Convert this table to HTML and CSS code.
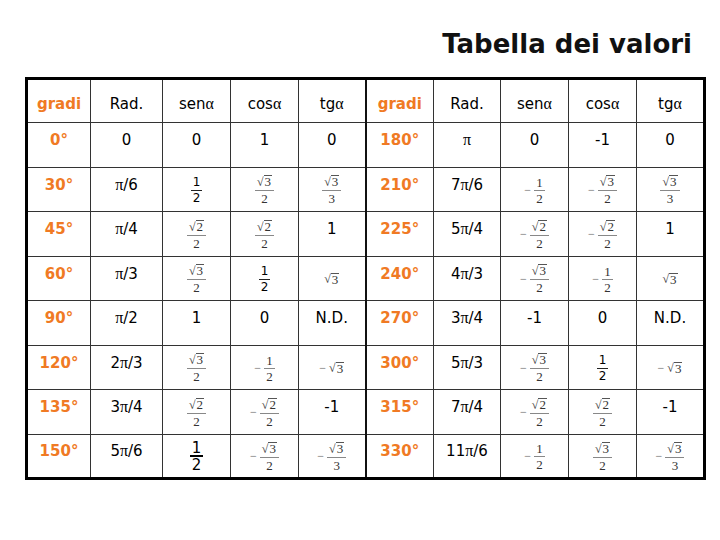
FILE: index.html
```html
<!DOCTYPE html>
<html lang="it">
<head>
<meta charset="utf-8">
<title>Tabella dei valori</title>
<link rel="stylesheet" href="styles.css">
</head>
<body>
<h1 class="title">Tabella dei valori</h1>
<table class="tab">
  <colgroup>
    <col class="c64"><col class="c72"><col class="c68"><col class="c68"><col class="c67 mid">
    <col class="c68"><col class="c67"><col class="c68"><col class="c68"><col class="c68">
  </colgroup>
  <thead>
    <tr>
      <th class="deg">gradi</th><th>Rad.</th><th>sen<i class="g">α</i></th><th>cos<i class="g">α</i></th><th class="sep">tg<i class="g">α</i></th>
      <th class="deg">gradi</th><th>Rad.</th><th>sen<i class="g">α</i></th><th>cos<i class="g">α</i></th><th>tg<i class="g">α</i></th>
    </tr>
  </thead>
  <tbody>
    <tr>
      <td class="deg">0°</td><td>0</td><td>0</td><td>1</td><td class="sep">0</td>
      <td class="deg">180°</td><td><i class="g">π</i></td><td>0</td><td>-1</td><td>0</td>
    </tr>
    <tr>
      <td class="deg">30°</td><td><i class="g">π</i>/6</td>
      <td><span class="fx"><span class="frac sans"><span class="num">1</span><span class="den">2</span></span></span></td>
      <td><span class="fx"><span class="frac"><span class="num"><span class="rt">√</span><span class="ov">3</span></span><span class="den">2</span></span></span></td>
      <td class="sep"><span class="fx"><span class="frac"><span class="num"><span class="rt">√</span><span class="ov">3</span></span><span class="den">3</span></span></span></td>
      <td class="deg">210°</td><td>7<i class="g">π</i>/6</td>
      <td><span class="fx"><span class="mn">−</span><span class="frac"><span class="num">1</span><span class="den">2</span></span></span></td>
      <td><span class="fx"><span class="mn">−</span><span class="frac"><span class="num"><span class="rt">√</span><span class="ov">3</span></span><span class="den">2</span></span></span></td>
      <td><span class="fx"><span class="frac"><span class="num"><span class="rt">√</span><span class="ov">3</span></span><span class="den">3</span></span></span></td>
    </tr>
    <tr>
      <td class="deg">45°</td><td><i class="g">π</i>/4</td>
      <td><span class="fx"><span class="frac"><span class="num"><span class="rt">√</span><span class="ov">2</span></span><span class="den">2</span></span></span></td>
      <td><span class="fx"><span class="frac"><span class="num"><span class="rt">√</span><span class="ov">2</span></span><span class="den">2</span></span></span></td>
      <td class="sep">1</td>
      <td class="deg">225°</td><td>5<i class="g">π</i>/4</td>
      <td><span class="fx"><span class="mn">−</span><span class="frac"><span class="num"><span class="rt">√</span><span class="ov">2</span></span><span class="den">2</span></span></span></td>
      <td><span class="fx"><span class="mn">−</span><span class="frac"><span class="num"><span class="rt">√</span><span class="ov">2</span></span><span class="den">2</span></span></span></td>
      <td>1</td>
    </tr>
    <tr>
      <td class="deg">60°</td><td><i class="g">π</i>/3</td>
      <td><span class="fx"><span class="frac"><span class="num"><span class="rt">√</span><span class="ov">3</span></span><span class="den">2</span></span></span></td>
      <td><span class="fx"><span class="frac sans"><span class="num">1</span><span class="den">2</span></span></span></td>
      <td class="sep"><span class="fx"><span class="rad"><span class="rt">√</span><span class="ov">3</span></span></span></td>
      <td class="deg">240°</td><td>4<i class="g">π</i>/3</td>
      <td><span class="fx"><span class="mn">−</span><span class="frac"><span class="num"><span class="rt">√</span><span class="ov">3</span></span><span class="den">2</span></span></span></td>
      <td><span class="fx"><span class="mn">−</span><span class="frac"><span class="num">1</span><span class="den">2</span></span></span></td>
      <td><span class="fx"><span class="rad"><span class="rt">√</span><span class="ov">3</span></span></span></td>
    </tr>
    <tr>
      <td class="deg">90°</td><td><i class="g">π</i>/2</td><td>1</td><td>0</td><td class="sep">N.D.</td>
      <td class="deg">270°</td><td>3<i class="g">π</i>/4</td><td>-1</td><td>0</td><td>N.D.</td>
    </tr>
    <tr>
      <td class="deg">120°</td><td>2<i class="g">π</i>/3</td>
      <td><span class="fx"><span class="frac"><span class="num"><span class="rt">√</span><span class="ov">3</span></span><span class="den">2</span></span></span></td>
      <td><span class="fx"><span class="mn">−</span><span class="frac"><span class="num">1</span><span class="den">2</span></span></span></td>
      <td class="sep"><span class="fx"><span class="mn">−</span><span class="rad"><span class="rt">√</span><span class="ov">3</span></span></span></td>
      <td class="deg">300°</td><td>5<i class="g">π</i>/3</td>
      <td><span class="fx"><span class="mn">−</span><span class="frac"><span class="num"><span class="rt">√</span><span class="ov">3</span></span><span class="den">2</span></span></span></td>
      <td><span class="fx"><span class="frac sans"><span class="num">1</span><span class="den">2</span></span></span></td>
      <td><span class="fx"><span class="mn">−</span><span class="rad"><span class="rt">√</span><span class="ov">3</span></span></span></td>
    </tr>
    <tr>
      <td class="deg">135°</td><td>3<i class="g">π</i>/4</td>
      <td><span class="fx"><span class="frac"><span class="num"><span class="rt">√</span><span class="ov">2</span></span><span class="den">2</span></span></span></td>
      <td><span class="fx"><span class="mn">−</span><span class="frac"><span class="num"><span class="rt">√</span><span class="ov">2</span></span><span class="den">2</span></span></span></td>
      <td class="sep">-1</td>
      <td class="deg">315°</td><td>7<i class="g">π</i>/4</td>
      <td><span class="fx"><span class="mn">−</span><span class="frac"><span class="num"><span class="rt">√</span><span class="ov">2</span></span><span class="den">2</span></span></span></td>
      <td><span class="fx"><span class="frac"><span class="num"><span class="rt">√</span><span class="ov">2</span></span><span class="den">2</span></span></span></td>
      <td>-1</td>
    </tr>
    <tr>
      <td class="deg">150°</td><td>5<i class="g">π</i>/6</td>
      <td><span class="fx"><span class="frac sans big"><span class="num">1</span><span class="den">2</span></span></span></td>
      <td><span class="fx"><span class="mn">−</span><span class="frac"><span class="num"><span class="rt">√</span><span class="ov">3</span></span><span class="den">2</span></span></span></td>
      <td class="sep"><span class="fx"><span class="mn">−</span><span class="frac"><span class="num"><span class="rt">√</span><span class="ov">3</span></span><span class="den">3</span></span></span></td>
      <td class="deg">330°</td><td>11<i class="g">π</i>/6</td>
      <td><span class="fx"><span class="mn">−</span><span class="frac"><span class="num">1</span><span class="den">2</span></span></span></td>
      <td><span class="fx"><span class="frac"><span class="num"><span class="rt">√</span><span class="ov">3</span></span><span class="den">2</span></span></span></td>
      <td><span class="fx"><span class="mn">−</span><span class="frac"><span class="num"><span class="rt">√</span><span class="ov">3</span></span><span class="den">3</span></span></span></td>
    </tr>
  </tbody>
</table>
</body>
</html>
```
FILE: styles.css
```css
html, body {
  margin: 0;
  padding: 0;
  background: #ffffff;
}
body {
  width: 720px;
  height: 540px;
  font-family: "DejaVu Sans", Verdana, sans-serif;
  color: #000;
}
.title {
  margin: 29px 28px 0 0;
  height: 30px;
  line-height: 30px;
  font-size: 26px;
  font-weight: bold;
  text-align: right;
  color: #111;
}
.tab {
  margin: 18px 0 0 25px;
  border-collapse: collapse;
  table-layout: fixed;
  width: 679px;
  border: 3px solid #000;
  font-size: 15px;
}
.c64 { width: 64px; }
.c67 { width: 67px; }
.c68 { width: 68px; }
.c72 { width: 72px; }
.tab th, .tab td {
  border: 1px solid #333;
  text-align: center;
  vertical-align: middle;
  padding: 0;
  font-weight: normal;
  white-space: nowrap;
  box-sizing: border-box;
}
.tab th {
  height: 44px;
  padding-top: 5px;
}
.tab td {
  height: 44.5px;
  padding-bottom: 9px;
}
.tab .sep {
  border-right: 2px solid #111;
}
.tab .deg {
  color: #f07a24;
  font-weight: bold;
}
.g {
  font-family: "Liberation Serif", "Times New Roman", serif;
  font-style: normal;
  font-size: 16px;
}
.fx {
  display: inline-flex;
  align-items: center;
  gap: 3px;
  vertical-align: middle;
  margin-top: 5px;
  margin-bottom: -6px;
  font-family: "Liberation Serif", "Times New Roman", serif;
  font-size: 13px;
  color: #333;
}
.mn {
  font-size: 12px;
  color: #666;
}
.frac {
  display: inline-flex;
  flex-direction: column;
  align-items: stretch;
  text-align: center;
}
.frac .num, .frac .den {
  display: block;
  line-height: 13px;
  padding: 0 2px;
}
.frac .num {
  border-bottom: 1px solid #888;
  padding-bottom: 1px;
}
.frac .den {
  padding-top: 1px;
}
.frac.sans {
  font-family: "DejaVu Sans", Verdana, sans-serif;
  color: #000;
  font-size: 12px;
}
.frac.sans .num {
  border-bottom-color: #222;
  padding: 0 1px 1px;
}
.frac.big {
  font-size: 15px;
}
.frac.big .num, .frac.big .den {
  line-height: 14px;
}
.frac.big .num {
  border-bottom: 2px solid #000;
  padding-bottom: 0;
}
.rt {
  font-size: 12px;
}
.ov {
  border-top: 1px solid #555;
  line-height: 12px;
  display: inline-block;
  padding: 0 1px;
}
.rad {
  display: inline-flex;
  align-items: center;
}
```
